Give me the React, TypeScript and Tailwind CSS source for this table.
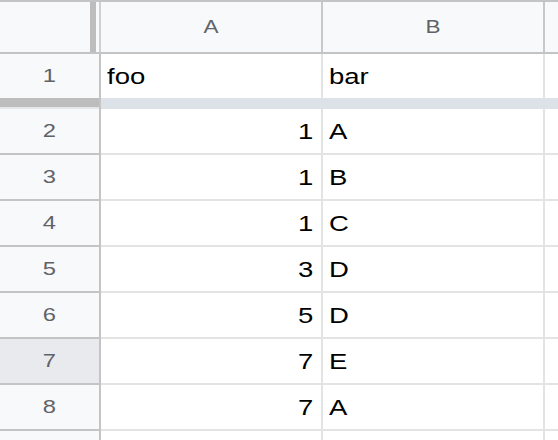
const rows: { n: number; a: string; b: string }[] = [
  { n: 2, a: "1", b: "A" },
  { n: 3, a: "1", b: "B" },
  { n: 4, a: "1", b: "C" },
  { n: 5, a: "3", b: "D" },
  { n: 6, a: "5", b: "D" },
  { n: 7, a: "7", b: "E" },
  { n: 8, a: "7", b: "A" },
]

// the grid text is drawn a bit wide, like the sheet font
function Txt({ children, origin }: { children: React.ReactNode; origin: "l" | "r" | "c" }) {
  const o = origin === "l" ? "origin-left" : origin === "r" ? "origin-right" : "origin-center"
  return <span className={`inline-block scale-x-125 ${o}`}>{children}</span>
}

function DataRow({ n, a, b, active }: { n?: number; a: string; b: string; active?: boolean }) {
  return (
    <div className="flex h-[46px] shrink-0">
      {/* row number */}
      <div
        className={`w-[101px] shrink-0 border-r-2 border-b-2 border-[#c4c4c4] flex items-center justify-center text-[19px] text-[#5f6368] ${
          active ? "bg-[#e8eaed]" : "bg-[#f8f9fa]"
        }`}
      >
        {n && <Txt origin="c">{n}</Txt>}
      </div>
      <div className="w-[222px] shrink-0 border-r-2 border-b-2 border-[#e2e3e3] flex items-center justify-end pr-[8px] text-[22px] text-black">
        <Txt origin="r">{a}</Txt>
      </div>
      <div className="w-[222px] shrink-0 border-r-2 border-b-2 border-[#e2e3e3] flex items-center pl-[6px] text-[22px] text-black">
        <Txt origin="l">{b}</Txt>
      </div>
      <div className="flex-1 border-b-2 border-[#e2e3e3]" />
    </div>
  )
}

export default function App() {
  return (
    <div className="w-[558px] h-[440px] overflow-hidden bg-white flex flex-col font-['Liberation_Sans',Arial,sans-serif]">
      {/* Column headers */}
      <div className="flex h-[54px] shrink-0 bg-[#f8f9fa] border-t-2 border-b-2 border-[#c4c4c4]">
        <div className="w-[101px] shrink-0 border-r-2 border-[#d0d0d0] flex">
          <div className="w-[90px]" />
          <div className="w-[6px] bg-[#bdbdbd]" />
        </div>
        <div className="w-[222px] shrink-0 border-r-2 border-[#c8c8c8] flex items-center justify-center text-[18px] text-[#5f6368]">
          <Txt origin="c">A</Txt>
        </div>
        <div className="w-[222px] shrink-0 border-r-2 border-[#c8c8c8] flex items-center justify-center text-[18px] text-[#5f6368]">
          <Txt origin="c">B</Txt>
        </div>
        <div className="flex-1" />
      </div>

      {/* Row 1 (frozen) */}
      <div className="flex h-[44px] shrink-0">
        <div className="w-[101px] shrink-0 bg-[#f8f9fa] border-r-2 border-[#c4c4c4] flex items-center justify-center text-[19px] text-[#5f6368]">
          <Txt origin="c">1</Txt>
        </div>
        <div className="w-[222px] shrink-0 border-r-2 border-[#e2e3e3] flex items-center pl-[6px] text-[22px] text-black">
          <Txt origin="l">foo</Txt>
        </div>
        <div className="w-[222px] shrink-0 border-r-2 border-[#e2e3e3] flex items-center pl-[6px] text-[22px] text-black">
          <Txt origin="l">bar</Txt>
        </div>
        <div className="flex-1" />
      </div>

      {/* Frozen divider */}
      <div className="flex h-[11px] shrink-0">
        <div className="w-[101px] shrink-0 border-r-2 border-[#c4c4c4] flex flex-col">
          <div className="h-[9px] bg-[#bdbdbd]" />
          <div className="flex-1 bg-[#e6e6e6]" />
        </div>
        <div className="flex-1 bg-[#dde1e8]" />
      </div>

      {rows.map((r) => (
        <DataRow key={r.n} n={r.n} a={r.a} b={r.b} active={r.n === 7} />
      ))}
      <DataRow a="" b="" />
    </div>
  )
}
